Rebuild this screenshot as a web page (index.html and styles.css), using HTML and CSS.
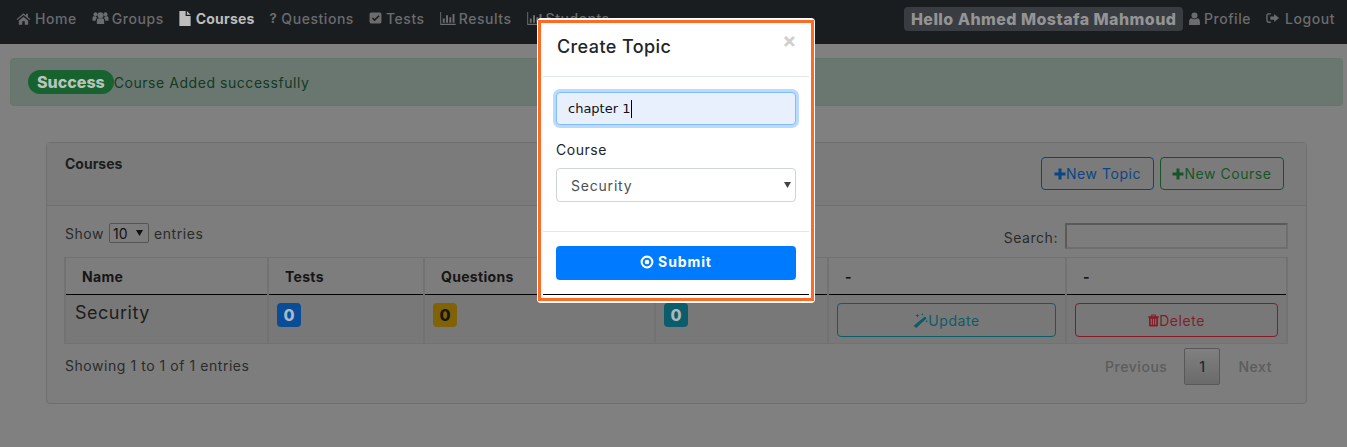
FILE: index.html
```html
<!DOCTYPE html>
<html lang="en">
<head>
    <meta charset="UTF-8">
    <title>Courses</title>
    <link rel="stylesheet" href="styles.css">
</head>
<body>
    <svg class="icon-defs" width="0" height="0">
        <symbol id="i-home" viewBox="0 0 24 24"><path d="M12 3.500 1 13l1.300 1.500L12 6.300l9.700 8.200L23 13l-4-3.400V4.500h-3v2.500zM4.500 15.500V22h5.500v-5.500h4V22h5.500v-6.500L12 9z"/></symbol>
        <symbol id="i-group" viewBox="0 0 24 24"><circle cx="12" cy="8" r="4.500"/><circle cx="4.500" cy="6.500" r="3"/><circle cx="19.500" cy="6.500" r="3"/><path d="M6.500 21v-5c0-2.500 1.500-3.500 3-3.500h5c1.500 0 3 1 3 3.500v5zM0 16v-4c0-1.500 1-2.500 2.500-2.500h2.800c.3 1 .9 1.800 1.700 2.500-1.500.7-2.200 2-2.200 4zM24 16v-4c0-1.500-1-2.500-2.500-2.500h-2.800c-.3 1-.9 1.800-1.700 2.500 1.500.7 2.200 2 2.200 4z"/></symbol>
        <symbol id="i-file" viewBox="0 0 18 24"><path d="M0 0h10v8h8v16H0zM12 0l6 6h-6z"/></symbol>
        <symbol id="i-check" viewBox="0 0 24 24"><path fill-rule="evenodd" d="M4 2h16a3 3 0 0 1 3 3v14a3 3 0 0 1-3 3H4a3 3 0 0 1-3-3V5a3 3 0 0 1 3-3zm6.300 16 9.200-9.200-2-2-7.200 7.200-3-3-2 2z"/></symbol>
        <symbol id="i-chart" viewBox="0 0 24 20"><path d="M0 0h1.500v18H24v2H0zM4 10h3v6.500H4zM9 5h3v11.500H9zM14 8h3v8.500h-3zM19 3h3v13.500h-3z"/></symbol>
        <symbol id="i-user" viewBox="0 0 20 24"><circle cx="10" cy="6.500" r="5.500"/><path d="M0 24v-6.500C0 14 2 12 4.500 11.500c3 2.300 8 2.300 11 0C18 12 20 14 20 17.500V24z"/></symbol>
        <symbol id="i-logout" viewBox="0 0 24 22"><path d="M9 2v2.500H5A2 2 0 0 0 3 6.500v9a2 2 0 0 0 2 2h4V20H5a4.500 4.500 0 0 1-4.500-4.500v-9A4.500 4.500 0 0 1 5 2z"/><path d="M15 3.500 24 11l-9 7.500V14H8V8h7z"/></symbol>
        <symbol id="i-plus" viewBox="0 0 24 24"><path d="M9 1h6v8h8v6h-8v8H9v-8H1V9h8z"/></symbol>
        <symbol id="i-magic" viewBox="0 0 24 24"><path d="M19 5.500 22 8.500 5 24 1 20.500zM7 1l1 2 2 1-2 1-1 2-1-2-2-1 2-1zM15 0l.7 1.500 1.300.5-1.300.7-.7 1.300-.7-1.300L13 2l1.300-.5zM22 11l.7 1.500 1.300.5-1.300.7-.7 1.300-.7-1.300-1.300-.7 1.300-.5z"/></symbol>
        <symbol id="i-trash" viewBox="0 0 22 24"><path fill-rule="evenodd" d="M7 0h8l1.500 3.500H22V6h-2v15.500a2.500 2.500 0 0 1-2.500 2.500h-13A2.500 2.500 0 0 1 2 21.500V6H0V3.500h5.500zM8.500 2 8 3.500h6L13.500 2zM5.500 8.500v12h2.200v-12zM9.900 8.500v12h2.200v-12zM14.300 8.500v12h2.200v-12z"/></symbol>
        <symbol id="i-dot" viewBox="0 0 24 24"><path fill-rule="evenodd" d="M12 1a11 11 0 1 1 0 22 11 11 0 0 1 0-22zm0 3.500a7.500 7.500 0 1 0 0 15 7.500 7.500 0 0 0 0-15zM12 8a4 4 0 1 1 0 8 4 4 0 0 1 0-8z"/></symbol>
    </svg>

    <nav class="topbar">
        <div class="nav-links">
            <a class="nav-link" href="#home"><svg class="ico ico-home"><use href="#i-home"/></svg>Home</a>
            <a class="nav-link" href="#groups"><svg class="ico ico-group"><use href="#i-group"/></svg>Groups</a>
            <a class="nav-link active" href="#courses"><svg class="ico ico-file"><use href="#i-file"/></svg>Courses</a>
            <a class="nav-link" href="#questions"><b class="ico-q">?</b>Questions</a>
            <a class="nav-link" href="#tests"><svg class="ico ico-check"><use href="#i-check"/></svg>Tests</a>
            <a class="nav-link" href="#results"><svg class="ico ico-chart"><use href="#i-chart"/></svg>Results</a>
            <a class="nav-link" href="#students"><svg class="ico ico-chart"><use href="#i-chart"/></svg>Students</a>
        </div>
        <div class="nav-user">
            <span class="hello">Hello Ahmed Mostafa Mahmoud</span>
            <a class="nav-link" href="#profile"><svg class="ico ico-user"><use href="#i-user"/></svg>Profile</a>
            <a class="nav-link" href="#logout"><svg class="ico ico-logout"><use href="#i-logout"/></svg>Logout</a>
        </div>
    </nav>

    <div class="alert"><span class="pill">Success</span>Course Added successfully</div>

    <section class="card">
        <header class="card-head">
            <h5>Courses</h5>
            <div class="head-btns">
                <a class="btn btn-blue" href="#topic"><svg class="ico ico-plus"><use href="#i-plus"/></svg>New Topic</a>
                <a class="btn btn-green" href="#course"><svg class="ico ico-plus"><use href="#i-plus"/></svg>New Course</a>
            </div>
        </header>
        <div class="card-body">
            <div class="table-top">
                <label class="len">Show <select class="len-select"><option>10</option></select> entries</label>
                <label class="search"><span class="search-txt">Search:</span> <input class="search-input" type="search"></label>
            </div>
            <table class="courses">
                <colgroup>
                    <col class="c-name"><col class="c-tests"><col class="c-quest"><col class="c-topics"><col class="c-upd"><col class="c-del">
                </colgroup>
                <thead>
                    <tr><th>Name</th><th>Tests</th><th>Questions</th><th></th><th>-</th><th>-</th></tr>
                </thead>
                <tbody>
                    <tr>
                        <td class="course-name">Security</td>
                        <td><span class="badge b-blue">0</span></td>
                        <td><span class="badge b-yellow">0</span></td>
                        <td><span class="badge b-teal">0</span></td>
                        <td><a class="btn btn-teal btn-wide" href="#update"><svg class="ico ico-magic"><use href="#i-magic"/></svg>Update</a></td>
                        <td><a class="btn btn-red btn-wide" href="#delete"><svg class="ico ico-trash"><use href="#i-trash"/></svg>Delete</a></td>
                    </tr>
                </tbody>
            </table>
            <div class="table-bottom">
                <span class="info">Showing 1 to 1 of 1 entries</span>
                <div class="pager">
                    <a class="page-txt" href="#prev">Previous</a>
                    <a class="page-cur" href="#1">1</a>
                    <a class="page-txt" href="#next">Next</a>
                </div>
            </div>
        </div>
    </section>

    <div class="modal">
        <div class="modal-frame">
            <div class="modal-head">
                <h4>Create Topic</h4>
                <span class="close">&times;</span>
            </div>
            <div class="modal-body">
                <div class="topic-input">chapter 1<i class="caret"></i></div>
                <label class="field-label" for="courseSel">Course</label>
                <select class="course-select" id="courseSel"><option>Security</option></select>
            </div>
            <div class="modal-foot">
                <button class="submit"><svg class="ico ico-dot"><use href="#i-dot"/></svg>Submit</button>
            </div>
        </div>
    </div>
</body>
</html>
```

FILE: styles.css
```css
/* colours are the dimmed ones, the page sits under the modal mask */
* {
    box-sizing: border-box;
}
html, body {
    height: 447px;
    overflow: hidden;
}
body {
    margin: 0;
    background-color: #808080;
    color: #1d1d1d;
    font-family: Inter, "Open Sans", sans-serif;
    font-size: 14px;
    letter-spacing: .55px;
}
a {
    text-decoration: none;
}
.icon-defs {
    position: absolute;
}
.ico {
    fill: currentColor;
    flex: none;
}

/* top bar */
.topbar {
    height: 44px;
    padding: 0 4.500px 8px 7.500px;
    background-color: #1a1d20;
    display: flex;
    justify-content: space-between;
    align-items: center;
}
.nav-links, .nav-user {
    display: flex;
    align-items: center;
}
.nav-link {
    padding: 0 7.500px;
    display: flex;
    align-items: center;
    gap: 3px;
    color: #6a6c6e;
    font-weight: 500;
    white-space: nowrap;
}
.nav-link.active {
    color: #bdbdbd;
    font-weight: 700;
    letter-spacing: .2px;
}
.ico-home {
    width: 17px;
    height: 15px;
}
.ico-group {
    width: 17px;
    height: 16px;
}
.ico-file {
    width: 12px;
    height: 15px;
    margin-right: 2px;
}
.ico-q {
    font-size: 13px;
    margin-right: 1px;
}
.ico-check {
    width: 13px;
    height: 14px;
    margin-right: 1px;
}
.ico-chart {
    width: 16px;
    height: 13px;
}
.ico-user {
    width: 11px;
    height: 13px;
    margin-right: 1px;
}
.ico-logout {
    width: 13px;
    height: 12px;
    margin-right: 3px;
}
.hello {
    height: 24px;
    padding: 0 7px;
    margin: 2px -2px 0 0;
    border-radius: 4px;
    background-color: #393d42;
    color: #949494;
    font-size: 16px;
    font-weight: 800;
    line-height: 24px;
    letter-spacing: .45px;
    white-space: nowrap;
}

/* success message */
.alert {
    height: 48px;
    margin: 14px 4px 0 10px;
    padding: 0 17px;
    border: 1px solid #63776a;
    border-radius: 4px;
    background-color: #6a7770;
    color: #123a24;
    display: flex;
    align-items: center;
}
.pill {
    height: 24px;
    padding: 0 9px;
    border-radius: 12px;
    background-color: #17622f;
    color: #b9c4bd;
    font-size: 16px;
    font-weight: 800;
    line-height: 24px;
    letter-spacing: 0;
}

/* courses card */
.card {
    width: 1261px;
    height: 262px;
    margin: 36px 0 0 46px;
    border: 1px solid #6f6f6f;
    border-radius: 4px;
    background-color: #7d7d7d;
}
.card-head {
    height: 63px;
    padding: 14px 22px 0 18px;
    border-bottom: 1px solid #6f6f6f;
    background-color: #7b7b7b;
    display: flex;
    justify-content: space-between;
}
.card-head h5 {
    margin: 0;
    font-size: 14px;
    font-weight: 700;
    letter-spacing: 0;
    line-height: 14px;
}
.head-btns {
    display: flex;
    gap: 6px;
}
.btn {
    height: 33px;
    padding: 0 11px;
    border: 1px solid;
    border-radius: 4px;
    display: inline-flex;
    justify-content: center;
    align-items: center;
    white-space: nowrap;
}
.btn-blue {
    color: #0a4585;
    width: 113px;
}
.btn-green {
    color: #175528;
    width: 124px;
}
.btn-teal {
    margin-right: 1px;
    color: #0d5c6a;
}
.btn-red {
    color: #851c2a;
}
.btn-wide {
    height: 34px;
    display: flex;
}
.ico-plus {
    width: 12px;
    height: 12px;
}
.ico-magic {
    width: 15px;
    height: 15px;
}
.ico-trash {
    width: 11px;
    height: 13px;
}
.card-body {
    padding: 17px 18px 0;
}
.table-top, .table-bottom {
    display: flex;
    justify-content: space-between;
}
.table-top {
    height: 34px;
}
.len {
    height: 20px;
    display: flex;
    align-items: center;
    gap: 5px;
    color: #2b2b2b;
}
.len-select {
    width: 40px;
    height: 20px;
    padding: 0 0 0 3px;
    border: 1px solid #555;
    border-radius: 2px;
    background: url("data:image/svg+xml,%3Csvg xmlns='http://www.w3.org/2000/svg' width='7' height='6'%3E%3Cpath d='M0 0h7L3.500 6z' fill='%23111'/%3E%3C/svg%3E") no-repeat right 5px center;
    color: #111;
    font: inherit;
    appearance: none;
}
.search {
    display: flex;
    align-items: center;
    gap: 7px;
    height: 26px;
    color: #2b2b2b;
}
.search-txt {
    margin-top: 3px;
}
.search-input {
    width: 223px;
    height: 26px;
    border: 2px solid;
    border-color: #5a5a5a #6e6e6e #6e6e6e #5a5a5a;
    background-color: transparent;
}

/* table */
.courses {
    width: 1224px;
    margin-left: -1px;
    border-collapse: collapse;
    table-layout: fixed;
    background-color: #787878;
}
.c-name { width: 203px; }
.c-tests { width: 156px; }
.c-quest { width: 231px; }
.c-topics { width: 173px; }
.c-upd { width: 238px; }
.courses th, .courses td {
    border: 2px solid #727272;
    border-top-width: 1px;
    border-bottom-width: 1px;
}
.courses th {
    height: 37px;
    padding: 0 16px;
    border-bottom: 1px solid #000;
    background-color: #7d7d7d;
    color: #161616;
    font-weight: 700;
    text-align: left;
    letter-spacing: .3px;
}
.courses td {
    height: 49px;
    padding: 8px 8px 6px;
    vertical-align: top;
}
.courses td.course-name {
    padding: 7px 9px 5px;
    font-size: 18px;
    letter-spacing: .5px;
}
.badge {
    width: 24px;
    height: 24px;
    border-radius: 4px;
    display: block;
    font-size: 16px;
    font-weight: 800;
    line-height: 24px;
    text-align: center;
    letter-spacing: 0;
}
.b-blue {
    background-color: #0a4d96;
    color: #a8b8c8;
}
.b-yellow {
    background-color: #806207;
    color: #171717;
}
.b-teal {
    background-color: #0d5c6a;
    color: #a8b8c0;
}
.table-bottom {
    padding-top: 4px;
    align-items: flex-start;
}
.info {
    padding-top: 9px;
    color: #2b2b2b;
}
.pager {
    margin-right: 16px;
    display: flex;
    align-items: center;
    gap: 17px;
}
.page-txt {
    color: #5c5c5c;
    font-weight: 500;
}
.page-cur {
    width: 36px;
    height: 37px;
    margin-right: 1px;
    border: 1px solid #585858;
    border-radius: 2px;
    background: linear-gradient(#808080, #6a6a6a);
    color: #1d2a38;
    line-height: 35px;
    text-align: center;
    font-weight: 500;
}

/* modal over the page */
.modal {
    position: absolute;
    top: 18px;
    left: 537px;
    width: 278px;
    height: 285px;
    padding: 2px 1px;
    border-radius: 4px;
    background-color: #fff;
}
.modal-frame {
    height: 281px;
    padding: 0 2px;
    border: 3px solid #ff6a25;
    color: #212529;
}
.modal-head {
    height: 54px;
    padding: 0 13px 0 14px;
    border-bottom: 1px solid #e3e6e9;
    display: flex;
    justify-content: space-between;
    align-items: flex-start;
}
.modal-head h4 {
    margin: 0;
    padding-top: 13px;
    font-size: 18px;
    font-weight: 500;
    line-height: 22px;
    letter-spacing: .4px;
}
.close {
    padding-top: 5px;
    margin-right: -1px;
    color: #cfcfcf;
    font-size: 21px;
    font-weight: 700;
    line-height: 25px;
}
.modal-body {
    height: 154px;
    padding: 15px 13px 0;
}
.topic-input {
    height: 33px;
    padding: 0 11px;
    border: 1px solid #80bdff;
    border-radius: 4px;
    background-color: #e8f0fe;
    box-shadow: 0 0 0 3px #b9dbff;
    color: #111;
    display: flex;
    align-items: center;
    font-family: "DejaVu Sans", sans-serif;
    font-size: 13px;
    letter-spacing: 0;
}
.caret {
    width: 1px;
    height: 18px;
    margin-left: 1px;
    background-color: #000;
}
.field-label {
    display: block;
    margin: 15px 0 8px;
    line-height: 20px;
}
.course-select {
    width: 100%;
    height: 34px;
    padding: 0 14px;
    border: 1px solid #ced4da;
    border-radius: 4px;
    background: #fff url("data:image/svg+xml,%3Csvg xmlns='http://www.w3.org/2000/svg' width='7' height='6'%3E%3Cpath d='M0 0h7L3.500 6z' fill='%23444'/%3E%3C/svg%3E") no-repeat right 4px center;
    color: #495057;
    font: inherit;
    letter-spacing: .8px;
    appearance: none;
}
.modal-foot {
    height: 64px;
    padding: 14px 13px 0;
    border-top: 1px solid #e3e6e9;
    border-bottom: 1px solid #000;
}
.submit {
    width: 100%;
    height: 34px;
    padding: 0 0 3px;
    border: none;
    border-radius: 4px;
    background-color: #007bff;
    color: #fff;
    display: flex;
    justify-content: center;
    align-items: center;
    gap: 4px;
    font: inherit;
    font-weight: 700;
    letter-spacing: .9px;
}
.ico-dot {
    width: 14px;
    height: 14px;
}
```
